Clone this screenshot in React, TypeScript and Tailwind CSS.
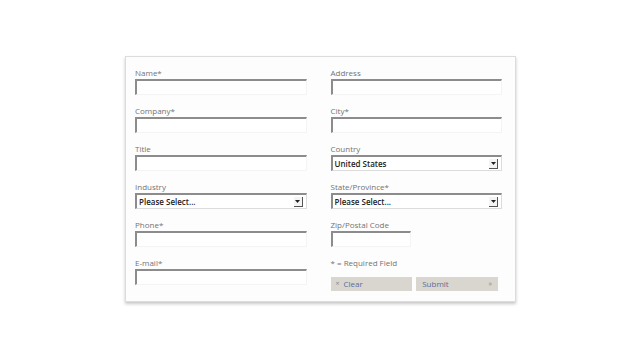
const font = { fontFamily: '"Open Sans", "Liberation Sans", Arial, sans-serif' };

const Field = ({ label, short }: { label: string; short?: boolean }) => (
  <div className="flex flex-col">
    <label className="h-[10px] text-[8px] leading-[10px] text-[#737373]">{label}</label>
    <div
      className={`mt-[1px] h-[16px] bg-white border-t-2 border-l-2 border-r border-b border-t-[#8c8c8c] border-l-[#8c8c8c] border-r-[#f4f4f4] border-b-[#f4f4f4] ${
        short ? "w-[80px]" : "w-full"
      }`}
    />
  </div>
);

const Select = ({ label, value }: { label: string; value: string }) => (
  <div className="flex flex-col">
    <label className="h-[10px] text-[8px] leading-[10px] text-[#737373]">{label}</label>
    <div className="mt-[1px] flex h-[16px] items-center bg-white border-t-2 border-l-2 border-r border-b border-t-[#8c8c8c] border-l-[#8c8c8c] border-r-[#dcdcdc] border-b-[#dcdcdc] pl-[2px] pr-[3px]">
      <span className="flex-1 text-[8px] font-semibold text-[#222]">{value}</span>
      <div className="flex h-[10px] w-[9px] items-center justify-center border-r border-b border-[#555] bg-[#f4f4f4]">
        <svg width="5" height="3" viewBox="0 0 5 3">
          <path d="M0 0h5L2.5 3z" fill="#222" />
        </svg>
      </div>
    </div>
  </div>
);

export default function App() {
  return (
    <div className="flex h-[360px] w-[640px] bg-white" style={font}>
      <div className="ml-[125px] mt-[56px] h-[246px] w-[391px] border border-[#dcdcdc] bg-[#fdfdfd] pl-[9px] pr-[13px] pt-[11px] shadow-[0_2px_3px_rgba(0,0,0,0.22)]">
        <div className="grid grid-cols-2 gap-x-[24px]">
          <div className="flex flex-col gap-[11px]">
            <Field label="Name*" />
            <Field label="Company*" />
            <Field label="Title" />
            <Select label="Industry" value="Please Select..." />
            <Field label="Phone*" />
            <Field label="E-mail*" />
          </div>
          <div className="flex flex-col gap-[11px]">
            <Field label="Address" />
            <Field label="City*" />
            <Select label="Country" value="United States" />
            <Select label="State/Province*" value="Please Select..." />
            <Field label="Zip/Postal Code" short />
            <div className="flex flex-col">
              <div className="h-[10px] text-[8px] leading-[10px] text-[#737373]">* = Required Field</div>
              <div className="mt-[9px] flex gap-[4px] pr-[4px]">
                <button className="flex h-[14px] w-[82px] items-center bg-[#d9d6cf] pl-[5px] text-[8px] text-[#5b6c98]">
                  <span className="mr-[4px] text-[7px] text-[#888]">×</span>Clear
                </button>
                <button className="flex h-[14px] w-[82px] items-center justify-between bg-[#d9d6cf] px-[6px] text-[8px] text-[#5b6c98]">
                  <span>Submit</span>
                  <span className="text-[7px] text-[#888]">»</span>
                </button>
              </div>
            </div>
          </div>
        </div>
      </div>
    </div>
  );
}
